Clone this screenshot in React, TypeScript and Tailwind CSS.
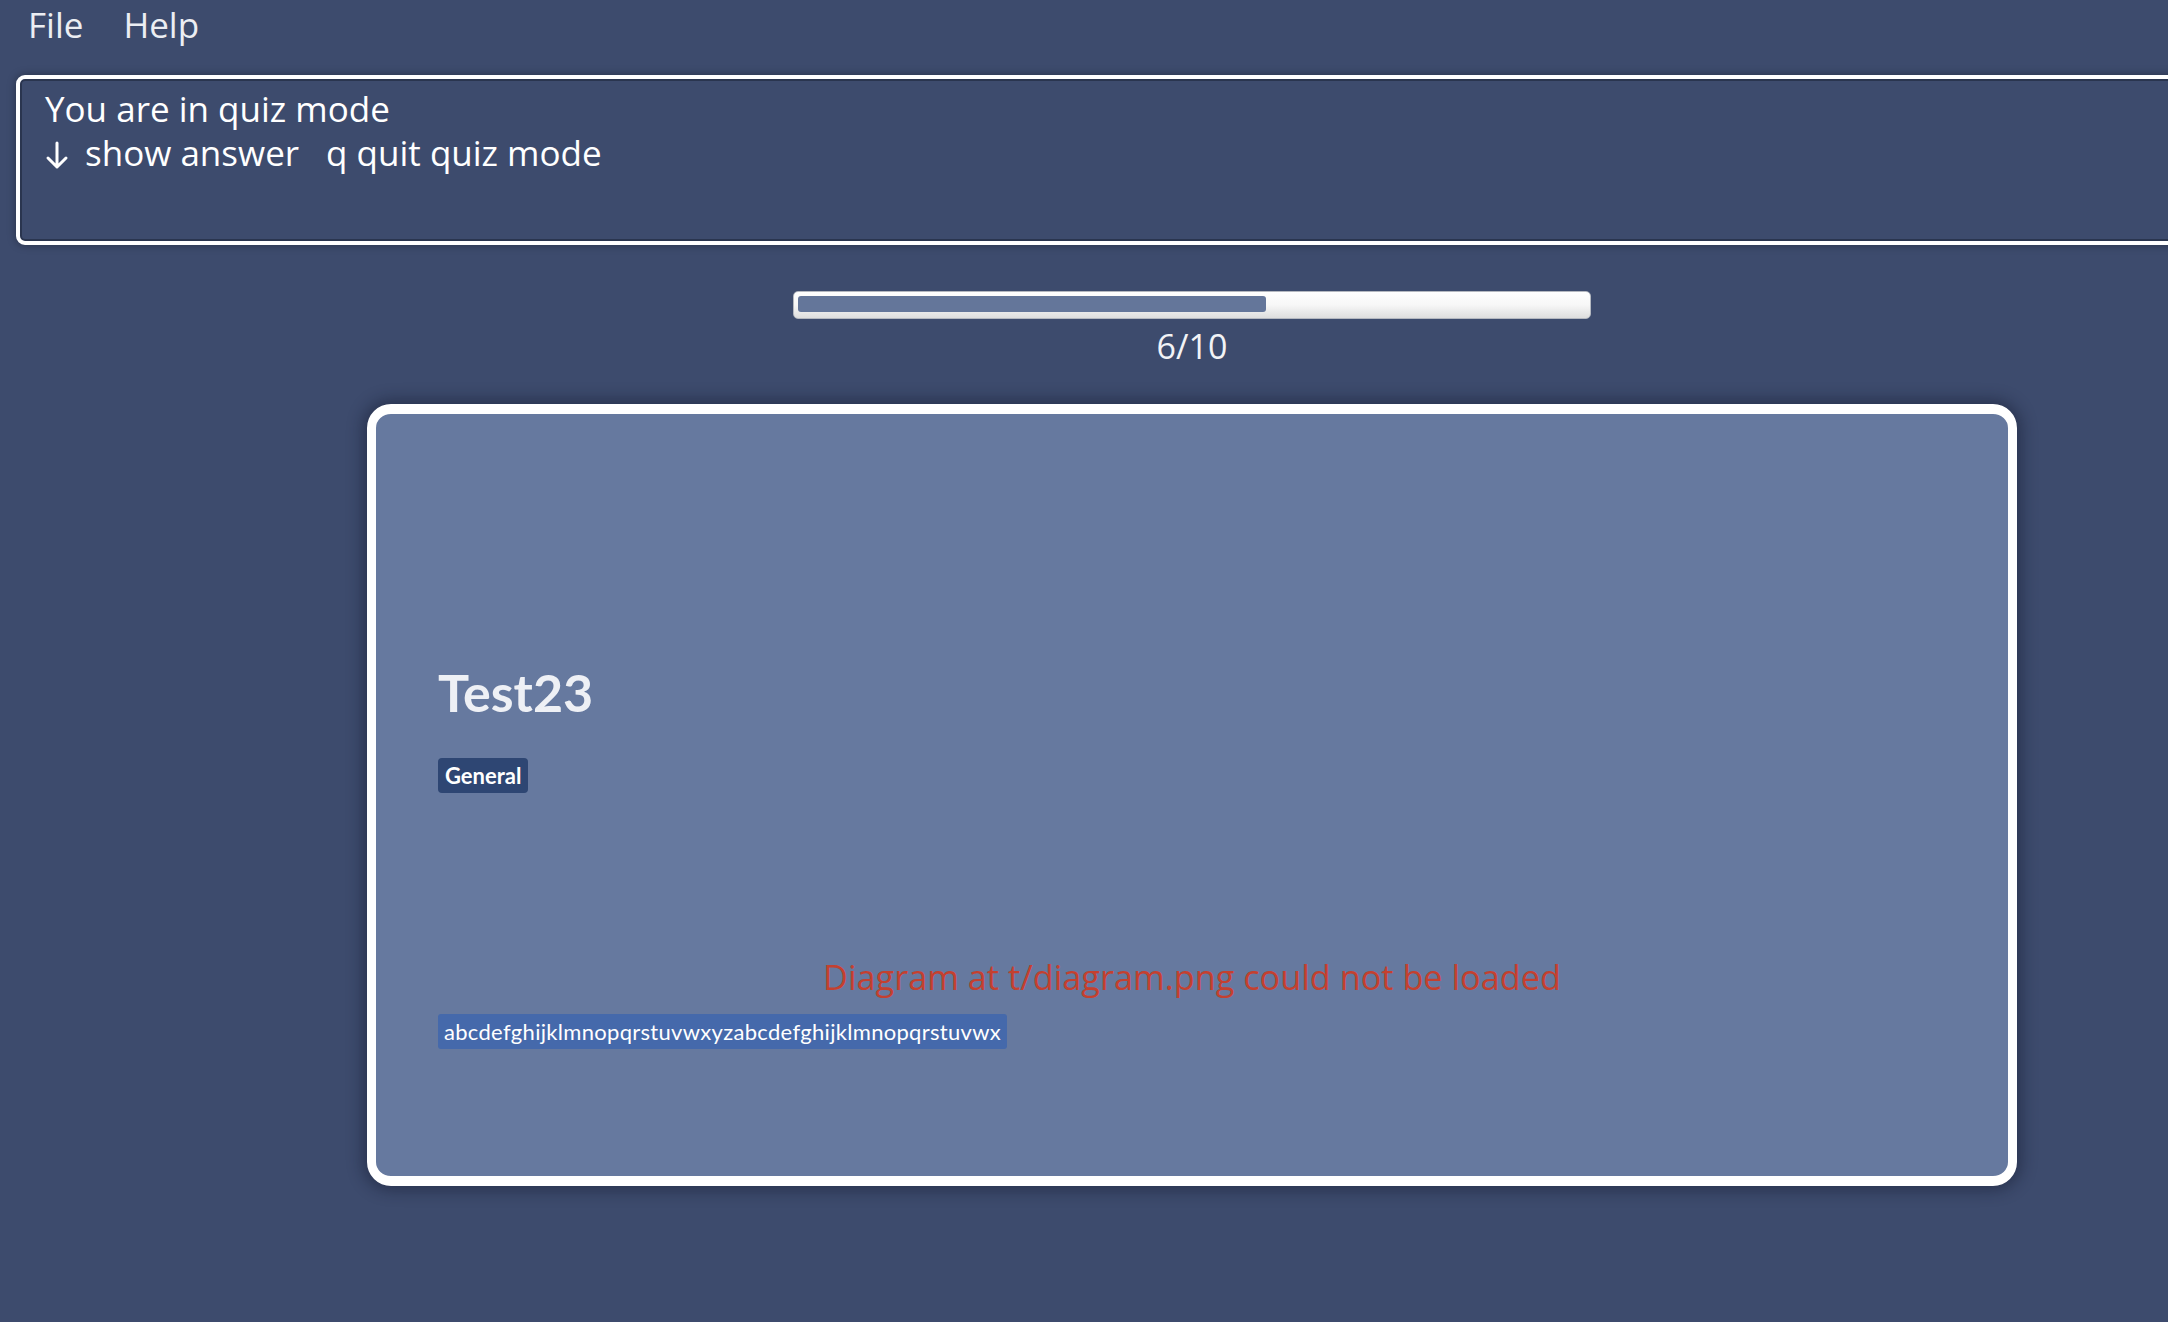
import React from "react";

const sans = { fontFamily: '"Open Sans", "Noto Sans", sans-serif' };

export default function App() {
  return (
    <div className="w-[2168px] h-[1322px] overflow-hidden bg-[#3d4b6d]">
      <div className="w-[2384px] flex flex-col font-['Open_Sans',_'Noto_Sans',_sans-serif]">
        {/* Menu bar */}
        <div className="h-[48px] flex items-start pl-[8px] pt-[2px] text-[35px] leading-[46px] text-[#eceef3]">
          <span className="px-[20px]">File</span>
          <span className="px-[20px]">Help</span>
        </div>

        {/* Quiz mode box */}
        <div className="mt-[27px] mx-[16px] h-[170px] rounded-[9px] border-[4px] border-white shadow-[0_0_8px_rgba(0,0,0,0.35),inset_0_0_0_2px_rgba(30,38,60,0.6)] pl-[25px] pt-[8px] text-[35px] leading-[44px] text-white">
          <div>You are in quiz mode</div>
          <div className="flex items-center">
            <svg width="40" height="44" viewBox="0 0 40 44" className="shrink-0">
              <path d="M12 12 V36 M3 27 L12 36 L21 27" stroke="white" strokeWidth="3" fill="none" strokeLinecap="round" strokeLinejoin="round" />
            </svg>
            <span>show answer</span>
            <span className="ml-[27px]">q quit quiz mode</span>
          </div>
        </div>

        {/* Progress */}
        <div className="flex flex-col items-center mt-[46px]">
          <div className="w-[798px] h-[28px] rounded-[5px] border border-[#b4b8c0] bg-linear-to-b from-white via-[#f7f7f7] to-[#dedede] pl-[4px] pt-[4px]">
            <div className="w-[468px] h-[16px] rounded-[3px] bg-[#64769a]" />
          </div>
          <div className="mt-[5px] text-[34px] leading-[44px] text-[#f2f3f6]">6/10</div>
        </div>

        {/* Card */}
        <div className="mt-[36px] mx-[367px] h-[782px] rounded-[24px] border-[9px] border-t-[10px] border-b-[10px] border-white bg-[#66799f] shadow-[0_0_16px_4px_rgba(15,20,40,0.45)] flex flex-col pl-[62px] pt-[248px]">
          <div className="font-['Lato',_sans-serif] font-bold text-[52px] leading-[60px] text-[#eef0f5]">Test23</div>
          <div className="mt-[36px] flex">
            <span className="h-[35px] px-[7px] rounded-[4px] bg-[#2e4673] font-['Lato',_sans-serif] font-bold text-[22px] leading-[35px] text-white">General</span>
          </div>
          <div className="mt-[161px] -ml-[62px] text-center text-[34.25px] leading-[46px] text-[#c4402f]" style={sans}>
            Diagram at t/diagram.png could not be loaded
          </div>
          <div className="mt-[14px] flex">
            <span className="h-[35px] px-[6px] rounded-[3px] bg-[#4569ab] font-['Lato',_sans-serif] text-[22px] tracking-[0.3px] leading-[35px] text-white">
              abcdefghijklmnopqrstuvwxyzabcdefghijklmnopqrstuvwx
            </span>
          </div>
        </div>
      </div>
    </div>
  );
}
